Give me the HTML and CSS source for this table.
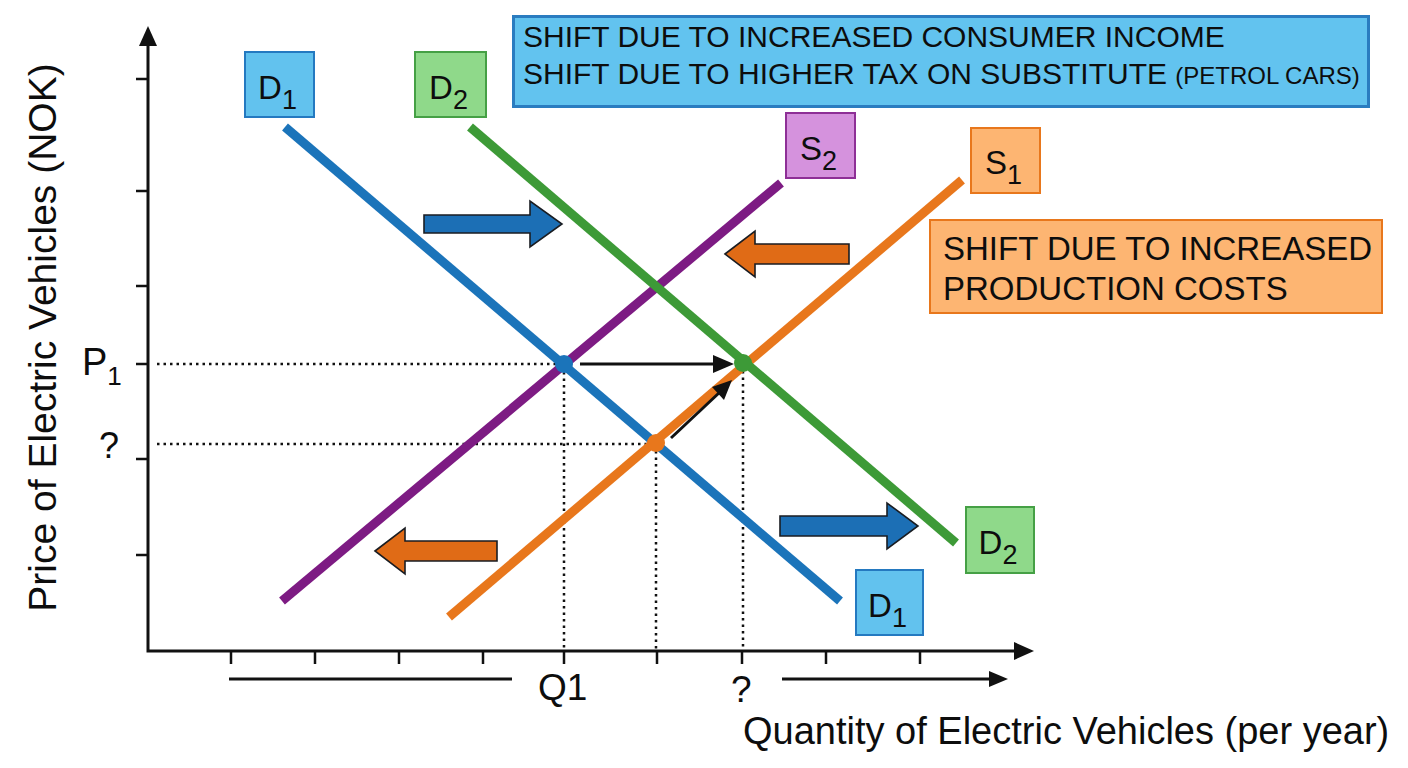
FILE: index.html
```html
<!DOCTYPE html>
<html lang="en">
<head>
<meta charset="utf-8">
<title>Electric Vehicle Market – Supply and Demand Shifts</title>
<link rel="stylesheet" href="styles.css">
</head>
<body>
<div class="canvas">
  <svg class="chart" width="1408" height="768" viewBox="0 0 1408 768" xmlns="http://www.w3.org/2000/svg">
    <!-- guide lines -->
    <path class="dots" d="M157 364 H556"/>
    <path class="dots" d="M157 444 H648"/>
    <path class="dots" d="M564 372 V650"/>
    <path class="dots" d="M656 451 V650"/>
    <path class="dots" d="M743 371 V650"/>

    <!-- axes -->
    <path class="axis" d="M148 44 V651 H1016"/>
    <polygon class="head" points="148,26 139,46 157,46"/>
    <polygon class="head" points="1034,651 1014,642 1014,660"/>
    <path class="tick" d="M136 79 H148 M136 191 H148 M136 286 H148 M136 364 H148 M136 459 H148 M136 555 H148"/>
    <path class="tick" d="M231 651 V664 M315 651 V664 M399 651 V664 M483 651 V664 M564 651 V664 M657 651 V664 M742 651 V664 M826 651 V664 M920 651 V664"/>

    <!-- quantity change arrows under axis -->
    <path class="axis" d="M229 679 H512"/>
    <path class="axis" d="M782 679 H992"/>
    <polygon class="head" points="1008,679 989,671 989,687"/>

    <!-- curves -->
    <path class="curve c-s2" d="M282 601 L781 183"/>
    <path class="curve c-d1" d="M285 127 L840 601"/>
    <path class="curve c-s1" d="M449 617 L962 180"/>
    <path class="curve c-d2" d="M470 127 L956 543"/>

    <!-- shift block arrows -->
    <polygon class="block b-blue" points="424,215 530,215 530,201 562,224 530,247 530,233 424,233"/>
    <polygon class="block b-blue" points="780,516 887,516 887,503 918,526 887,549 887,536 780,536"/>
    <polygon class="block b-orange" points="725,254 755,231 755,244 849,244 849,264 755,264 755,277"/>
    <polygon class="block b-orange" points="375,551 405,528 405,541 497,541 497,561 405,561 405,574"/>

    <!-- equilibrium points -->
    <circle class="pt-blue" cx="564" cy="364" r="9"/>
    <circle class="pt-green" cx="743" cy="363" r="9"/>
    <circle class="pt-orange" cx="656" cy="443" r="9"/>

    <!-- movement arrows -->
    <path class="move" d="M580 364 H716"/>
    <polygon class="head" points="734,364 713,355 713,373"/>
    <path class="move" d="M671 438 L720 392"/>
    <polygon class="head" points="732,380 712,387 724,400"/>
  </svg>

  <div class="note note-demand">
    <div class="note-line">SHIFT DUE TO INCREASED CONSUMER INCOME</div>
    <div class="note-line">SHIFT DUE TO HIGHER TAX ON SUBSTITUTE <span class="note-small">(PETROL CARS)</span></div>
  </div>
  <div class="note note-supply">
    <div class="note-line">SHIFT DUE TO INCREASED</div>
    <div class="note-line">PRODUCTION COSTS</div>
  </div>

  <div class="tag tag-blue tag-d1-top">D<span class="sub">1</span></div>
  <div class="tag tag-green tag-d2-top">D<span class="sub">2</span></div>
  <div class="tag tag-purple tag-s2">S<span class="sub">2</span></div>
  <div class="tag tag-orange tag-s1">S<span class="sub">1</span></div>
  <div class="tag tag-blue tag-d1-bottom">D<span class="sub">1</span></div>
  <div class="tag tag-green tag-d2-bottom">D<span class="sub">2</span></div>

  <div class="axis-label y-title">Price of Electric Vehicles (NOK)</div>
  <div class="axis-label x-title">Quantity of Electric Vehicles (per year)</div>

  <div class="mark mark-p1">P<span class="mark-sub">1</span></div>
  <div class="mark mark-pq">?</div>
  <div class="mark mark-q1">Q1</div>
  <div class="mark mark-qq">?</div>
</div>
</body>
</html>
```

FILE: styles.css
```css
html, body {
  margin: 0;
  padding: 0;
  background: #ffffff;
}

body {
  font-family: "Liberation Sans", Arial, sans-serif;
  color: #0d0d0d;
}

.canvas {
  position: relative;
  width: 1408px;
  height: 768px;
  overflow: hidden;
  background: #ffffff;
}

.chart {
  display: block;
}

/* ---------- SVG strokes ---------- */
.axis {
  fill: none;
  stroke: #111111;
  stroke-width: 3;
}

.tick {
  fill: none;
  stroke: #111111;
  stroke-width: 2.5;
}

.head {
  fill: #111111;
}

.dots {
  fill: none;
  stroke: #111111;
  stroke-width: 2.5;
  stroke-dasharray: 2.5 4;
}

.curve {
  fill: none;
  stroke-width: 9;
  stroke-linecap: butt;
}

.c-d1 { stroke: #1b74ba; }
.c-d2 { stroke: #3d9a37; }
.c-s1 { stroke: #e8771c; }
.c-s2 { stroke: #7d1b83; }

.block {
  stroke: #1a1d22;
  stroke-width: 1.6;
  stroke-linejoin: miter;
}

.b-blue { fill: #1c6fb5; }
.b-orange { fill: #e06b16; }

.pt-blue { fill: #1b74ba; }
.pt-green { fill: #3d9a37; }
.pt-orange { fill: #e8771c; }

.move {
  fill: none;
  stroke: #111111;
  stroke-width: 3;
}

/* ---------- Explanation notes ---------- */
.note {
  position: absolute;
  box-sizing: border-box;
  white-space: nowrap;
}

.note-demand {
  left: 512px;
  top: 15px;
  width: 858px;
  height: 93px;
  padding: 0 0 0 8px;
  background: #62c3ef;
  border: 3px solid #2a7cc0;
  font-size: 30px;
  line-height: 37px;
}

.note-small {
  font-size: 24px;
}

.note-supply {
  left: 929px;
  top: 219px;
  width: 454px;
  height: 95px;
  padding: 8px 0 0 12px;
  background: #fdb572;
  border: 2px solid #e8771c;
  font-size: 33px;
  line-height: 40px;
}

/* ---------- Curve tags ---------- */
.tag {
  position: absolute;
  box-sizing: border-box;
  width: 71px;
  height: 67px;
  padding-top: 18px;
  padding-right: 4px;
  text-align: center;
  font-size: 33px;
  line-height: 33px;
  white-space: nowrap;
}

.tag .sub {
  font-size: 27px;
  line-height: 0;
  vertical-align: -10px;
}

.tag-blue {
  background: #62c2ee;
  border: 2px solid #2479c0;
}

.tag-green {
  background: #8fd98a;
  border: 2px solid #45a045;
}

.tag-purple {
  background: #d592dd;
  border: 2px solid #8e2f96;
}

.tag-orange {
  background: #fdb572;
  border: 2px solid #e8771c;
}

.tag-d1-top { left: 244px; top: 51px; }
.tag-d2-top { left: 414px; top: 51px; width: 73px; }
.tag-s2 { left: 785px; top: 112px; }
.tag-s1 { left: 970px; top: 127px; padding-top: 17px; }
.tag-d1-bottom { left: 855px; top: 569px; width: 69px; }
.tag-d2-bottom { left: 965px; top: 506px; width: 70px; height: 68px; }

/* ---------- Axis titles ---------- */
.axis-label {
  position: absolute;
  white-space: nowrap;
}

.y-title {
  left: -268px;
  top: 318px;
  width: 620px;
  height: 39px;
  font-size: 39px;
  line-height: 39px;
  text-align: center;
  transform: rotate(-90deg);
  transform-origin: 50% 50%;
}

.x-title {
  left: 743px;
  top: 712px;
  font-size: 38px;
  line-height: 38px;
}

/* ---------- Axis value marks ---------- */
.mark {
  position: absolute;
  white-space: nowrap;
}

.mark-p1 {
  left: 82px;
  top: 343px;
  font-size: 38px;
  line-height: 38px;
}

.mark-sub {
  font-size: 26px;
  line-height: 0;
  vertical-align: -10px;
}

.mark-pq {
  left: 99px;
  top: 428px;
  font-size: 36px;
  line-height: 36px;
}

.mark-q1 {
  left: 538px;
  top: 669px;
  font-size: 37px;
  line-height: 37px;
}

.mark-qq {
  left: 731px;
  top: 671px;
  font-size: 37px;
  line-height: 37px;
}
```
